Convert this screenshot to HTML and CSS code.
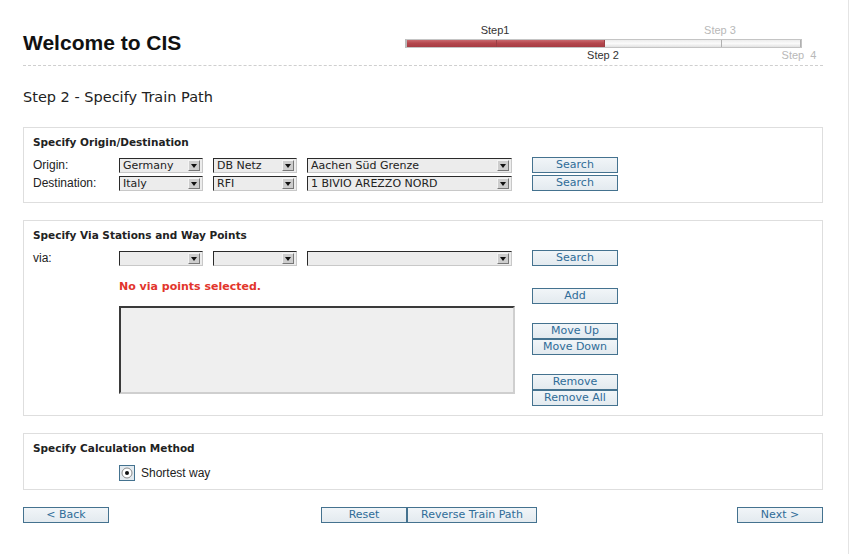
FILE: index.html
```html
<!DOCTYPE html>
<html lang="en">
  <head>
    <meta charset="UTF-8" />
    <title>Welcome to CIS - Step 2</title>
    <link rel="stylesheet" href="styles.css">
  </head>
  <body>
    <div class="page">
      <header class="top">
        <h1 class="title">Welcome to CIS</h1>
        <div class="steps">
          <div class="step-labels">
            <span class="lbl done">Step1</span><span></span><span class="lbl todo">Step 3</span><span></span>
          </div>
          <div class="bar">
            <span class="seg done"></span><span class="seg done"></span><span class="seg"></span><span class="seg"></span>
          </div>
          <div class="step-labels">
            <span></span><span class="lbl done">Step 2</span><span></span><span class="lbl todo">Step&nbsp; 4</span>
          </div>
        </div>
      </header>
      <div class="rule"></div>

      <h2 class="subtitle">Step 2 - Specify Train Path</h2>

      <!-- origin / destination -->
      <section class="box">
        <h3 class="box-title">Specify Origin/Destination</h3>
        <div class="row">
          <span class="label">Origin:</span>
          <div class="sel"><span class="val">Germany</span><span class="arrow"></span></div>
          <div class="sel"><span class="val">DB Netz</span><span class="arrow"></span></div>
          <div class="sel"><span class="val">Aachen Süd Grenze</span><span class="arrow"></span></div>
          <button class="btn">Search</button>
        </div>
        <div class="row">
          <span class="label">Destination:</span>
          <div class="sel"><span class="val">Italy</span><span class="arrow"></span></div>
          <div class="sel"><span class="val">RFI</span><span class="arrow"></span></div>
          <div class="sel"><span class="val">1 BIVIO AREZZO NORD</span><span class="arrow"></span></div>
          <button class="btn">Search</button>
        </div>
      </section>

      <!-- via points -->
      <section class="box">
        <h3 class="box-title">Specify Via Stations and Way Points</h3>
        <div class="row">
          <span class="label">via:</span>
          <div class="sel"><span class="val"></span><span class="arrow"></span></div>
          <div class="sel"><span class="val"></span><span class="arrow"></span></div>
          <div class="sel"><span class="val"></span><span class="arrow"></span></div>
          <button class="btn">Search</button>
        </div>
        <div class="via-body">
          <div class="via-left">
            <p class="msg">No via points selected.</p>
            <div class="listbox"></div>
          </div>
          <div class="via-buttons">
            <button class="btn">Add</button>
            <div class="btn-pair">
              <button class="btn">Move Up</button>
              <button class="btn">Move Down</button>
            </div>
            <div class="btn-pair">
              <button class="btn">Remove</button>
              <button class="btn">Remove All</button>
            </div>
          </div>
        </div>
      </section>

      <!-- calculation -->
      <section class="box calc">
        <h3 class="box-title">Specify Calculation Method</h3>
        <div class="radio-row">
          <span class="radio">
            <svg width="12" height="12" viewBox="0 0 12 12">
              <circle cx="6" cy="6" r="5" fill="#fff" stroke="#8a8a8a" stroke-width="1"/>
              <circle cx="6" cy="6" r="2" fill="#111"/>
            </svg>
          </span>
          <span class="radio-text">Shortest way</span>
        </div>
      </section>

      <div class="actions">
        <button class="btn">&lt; Back</button>
        <div class="mid">
          <button class="btn">Reset</button>
          <button class="btn wide">Reverse Train Path</button>
        </div>
        <button class="btn">Next &gt;</button>
      </div>
    </div>
  </body>
</html>
```

FILE: styles.css
```css
body {
  margin: 0;
  background: #fff;
  font-family: "DejaVu Sans", Verdana, sans-serif;
  color: #222;
}

.page {
  width: 800px;
  padding: 0 25px 0 23px;
  border-right: 1px solid #e4e4e4;
  min-height: 554px;
}

/* header + progress */
.top {
  display: flex;
  justify-content: space-between;
  align-items: center;
  padding-top: 24px;
}

.title {
  margin: 0;
  font-family: "Liberation Sans", Arial, sans-serif;
  font-size: 21px;
  font-weight: bold;
  color: #111;
}

.steps {
  margin-right: 21px;
  font-family: "Liberation Sans", Arial, sans-serif;
  font-size: 11px;
}

.step-labels,
.bar {
  display: grid;
  grid-template-columns: 90px 108px 117px 79px;
}

.step-labels {
  height: 13px;
  line-height: 13px;
}

.lbl {
  justify-self: end;
  transform: translateX(50%);
  white-space: nowrap;
}

.lbl.done {
  color: #333;
}

.lbl.todo {
  color: #b8b8b8;
}

.bar {
  height: 9px;
  margin: 2px 0 1px;
  border: 1px solid #c4c4c4;
  border-left: 2px solid #bbb;
  box-sizing: border-box;
}

.seg {
  border-right: 1px solid #b0b0b0;
  background: linear-gradient(#ededed, #fafafa 50%, #e2e2e2);
}

.seg.done {
  background: linear-gradient(#c96a6f, #b4474d 45%, #a73c43);
  border-right-color: #9a4046;
}

.rule {
  margin-top: 3px;
  border-top: 1px dashed #cfcfcf;
}

.subtitle {
  margin: 22px 0 21px;
  font-size: 14.5px;
  font-weight: normal;
  line-height: 18px;
  color: #222;
}

/* boxes */
.box {
  border: 1px solid #dedede;
  padding: 7px 9px 9px 9px;
  margin-bottom: 17px;
}

.box.calc {
  padding-bottom: 8px;
}

.box-title {
  margin: 0 0 8px;
  font-size: 10.5px;
  line-height: 14px;
  font-weight: bold;
  color: #222;
}

.row {
  display: grid;
  grid-template-columns: 76px 84px 84px 205px 86px;
  column-gap: 10px;
  align-items: center;
  height: 16px;
  margin-bottom: 2px;
}

.label {
  font-family: "Liberation Sans", Arial, sans-serif;
  font-size: 12px;
  color: #222;
}

.sel {
  display: flex;
  align-items: center;
  height: 15px;
  box-sizing: border-box;
  border: 1px solid #c8c8c8;
  border-top-color: #2a2a2a;
  border-left-color: #2a2a2a;
  background: #ececec;
}

.val {
  flex: 1;
  padding-left: 3px;
  font-size: 11px;
  line-height: 13px;
  white-space: nowrap;
  overflow: hidden;
}

.arrow {
  width: 12px;
  height: 11px;
  margin-right: 2px;
  box-sizing: border-box;
  border: 1px solid #777;
  border-top-color: #f4f4f4;
  border-left-color: #f4f4f4;
  background: #cdcdcd;
  position: relative;
}

.arrow::after {
  content: "";
  position: absolute;
  left: 2px;
  top: 3px;
  border-left: 3px solid transparent;
  border-right: 3px solid transparent;
  border-top: 4px solid #111;
}

.btn {
  width: 86px;
  height: 16px;
  padding: 0;
  box-sizing: border-box;
  border: 1px solid #44728f;
  background: linear-gradient(#f1f5f8, #e3eaef);
  font-family: "DejaVu Sans", Verdana, sans-serif;
  font-size: 11px;
  line-height: 14px;
  color: #2f6c98;
  cursor: pointer;
}

.row .btn {
  margin-left: 10px;
}

/* via section */
.via-body {
  display: flex;
}

.via-left {
  width: 403px;
  margin-left: 86px;
}

.msg {
  margin: 12px 0 0;
  font-size: 11px;
  line-height: 14px;
  font-weight: bold;
  color: #e2352c;
}

.listbox {
  width: 396px;
  height: 88px;
  margin-top: 12px;
  box-sizing: border-box;
  border: 2px solid #cfcfcf;
  border-top-color: #3a3a3a;
  border-left-color: #3a3a3a;
  background: #efefef;
}

.via-buttons {
  display: flex;
  flex-direction: column;
  gap: 19px;
  margin-left: 10px;
  padding-top: 20px;
}

.btn-pair {
  display: flex;
  flex-direction: column;
}

/* calculation */
.radio-row {
  display: flex;
  align-items: center;
  margin: 10px 0 0 86px;
  height: 16px;
}

.radio {
  display: flex;
  align-items: center;
  justify-content: center;
  width: 16px;
  height: 16px;
  box-sizing: border-box;
  border: 1px solid #44728f;
  background: #e3eaef;
}

.radio-text {
  margin-left: 6px;
  font-family: "Liberation Sans", Arial, sans-serif;
  font-size: 12px;
  color: #222;
}

/* bottom actions */
.actions {
  display: flex;
  justify-content: space-between;
  align-items: center;
}

.mid {
  display: flex;
  margin-left: 12px;
}

.btn.wide {
  width: 130px;
}
```
